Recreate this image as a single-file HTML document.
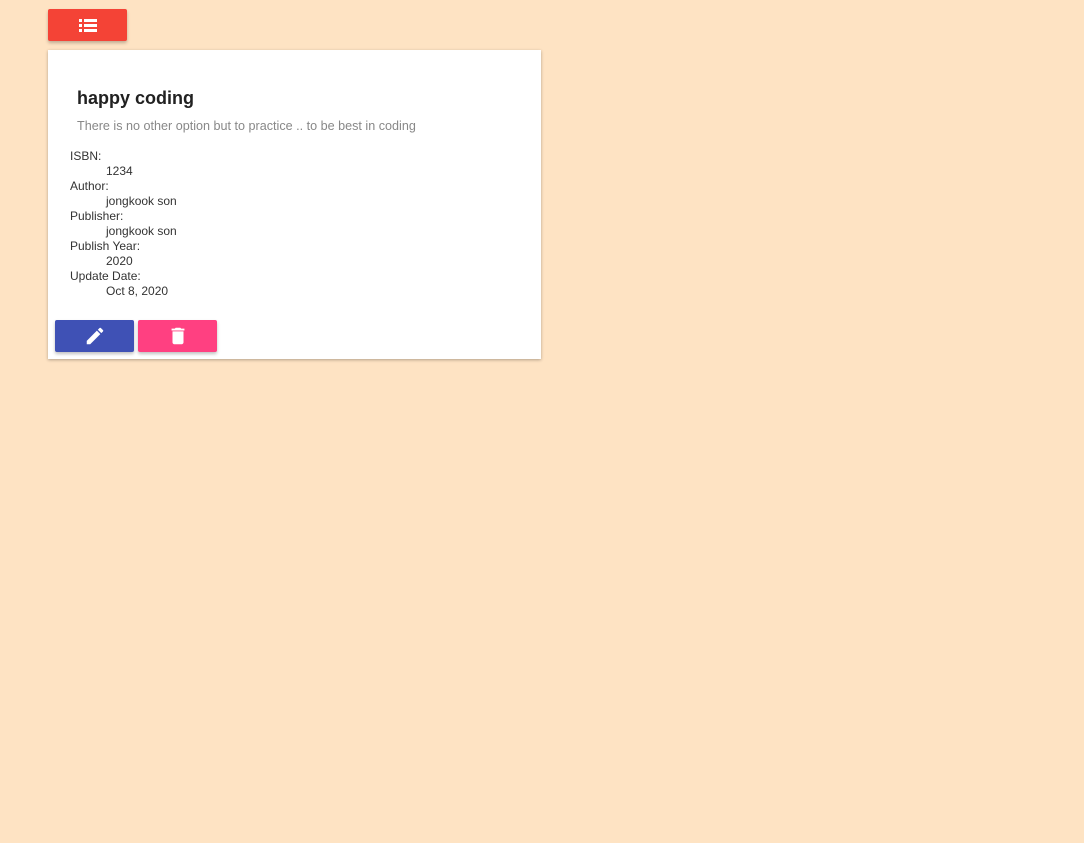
<!DOCTYPE html>
<html><head><style>
body{margin:0;background:#fee3c3;font-family:"Liberation Sans",sans-serif;width:1084px;height:843px;position:relative;overflow:hidden}
.btn{position:absolute;height:32px;width:79px;border-radius:2px;box-shadow:0 2px 3px rgba(0,0,0,.25);display:flex;align-items:center;justify-content:center}
.card{position:absolute;left:48px;top:50px;width:493px;height:309px;background:#fff;box-shadow:0 1px 3px rgba(0,0,0,.3)}
.t{position:absolute;left:29px;top:38px;font-size:18px;font-weight:bold;color:#212121}
.s{position:absolute;left:29px;top:69px;font-size:12.6px;color:#888}
.dl{position:absolute;left:22px;top:99px;font-size:12px;color:#333;line-height:15px}
.dl div.v{padding-left:36px}
</style></head><body>
<div class="btn" style="left:48px;top:9px;background:#f44336">
<svg width="18" height="13" viewBox="0 0 18 13" fill="#fff"><rect x="0" y="0" width="3" height="3"/><rect x="5" y="0" width="13" height="3"/><rect x="0" y="5" width="3" height="3"/><rect x="5" y="5" width="13" height="3"/><rect x="0" y="10" width="3" height="3"/><rect x="5" y="10" width="13" height="3"/></svg></div>
<div class="card">
<div class="t">happy coding</div>
<div class="s">There is no other option but to practice .. to be best in coding</div>
<div class="dl"><div>ISBN:</div><div class="v">1234</div><div>Author:</div><div class="v">jongkook son</div><div>Publisher:</div><div class="v">jongkook son</div><div>Publish Year:</div><div class="v">2020</div><div>Update Date:</div><div class="v">Oct 8, 2020</div></div>
</div>
<div class="btn" style="left:55px;top:320px;background:#3f51b5">
<svg width="22" height="22" viewBox="0 0 24 24" fill="#fff"><path d="M3 17.25V21h3.75L17.81 9.94l-3.75-3.75L3 17.25zM20.71 7.04a1 1 0 000-1.41l-2.34-2.34a1 1 0 00-1.41 0l-1.83 1.83 3.75 3.75 1.83-1.83z"/></svg></div>
<div class="btn" style="left:138px;top:320px;background:#ff4081">
<svg width="22" height="22" viewBox="0 0 24 24" fill="#fff"><path d="M6 19c0 1.1.9 2 2 2h8c1.1 0 2-.9 2-2V7H6v12zM19 4h-3.5l-1-1h-5l-1 1H5v2h14V4z"/></svg></div>
</body></html>
